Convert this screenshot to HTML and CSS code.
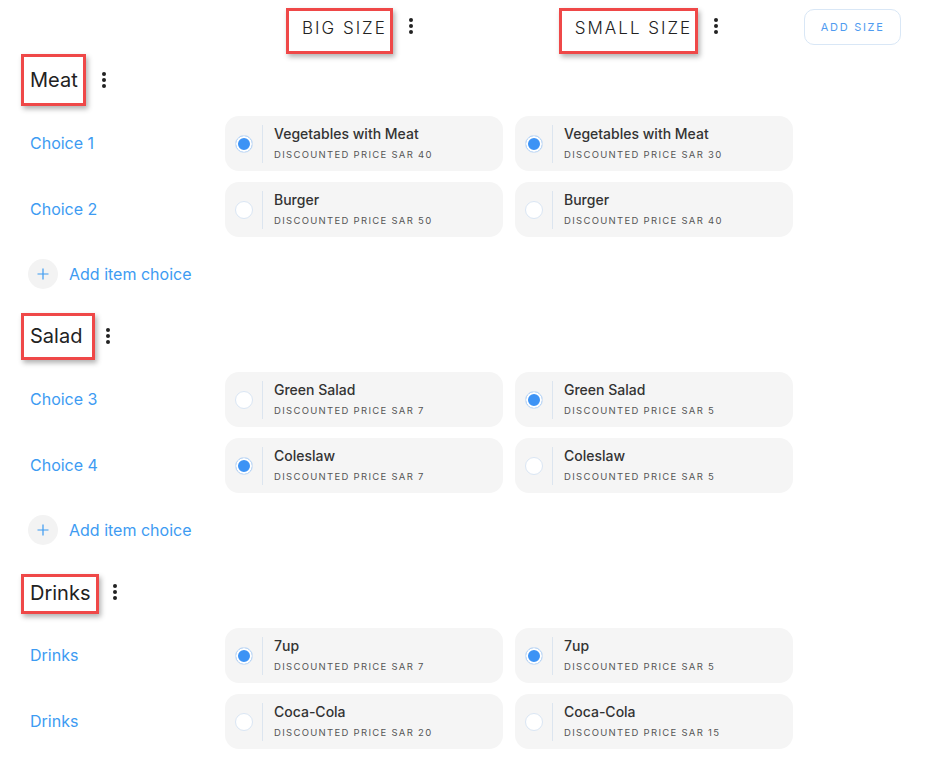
FILE: index.html
```html
<html lang="en">
    <head>
        <title>Item Choices</title>

        <link rel="stylesheet" href="styles.css">
    </head>

    <body>
        <div class="page">
            <div class="sizes">
                <div class="size size-big">
                    <span class="mark size-name">BIG SIZE</span>
                    <span class="kebab"><i></i><i></i><i></i></span>
                </div>
                <div class="size size-small">
                    <span class="mark size-name">SMALL SIZE</span>
                    <span class="kebab"><i></i><i></i><i></i></span>
                </div>
                <div class="size-action">
                    <button class="add-size">ADD SIZE</button>
                </div>
            </div>

            <div class="group">
                <div class="group-head">
                    <span class="mark group-name mark-meat">Meat</span>
                    <span class="kebab"><i></i><i></i><i></i></span>
                </div>

                <div class="row">
                    <div class="label">Choice 1</div>
                    <div class="card">
                        <span class="radio checked"></span>
                        <div class="info"><b>Vegetables with Meat</b><small>Discounted price SAR 40</small></div>
                    </div>
                    <div class="card">
                        <span class="radio checked"></span>
                        <div class="info"><b>Vegetables with Meat</b><small>Discounted price SAR 30</small></div>
                    </div>
                </div>

                <div class="row">
                    <div class="label">Choice 2</div>
                    <div class="card">
                        <span class="radio"></span>
                        <div class="info"><b>Burger</b><small>Discounted price SAR 50</small></div>
                    </div>
                    <div class="card">
                        <span class="radio"></span>
                        <div class="info"><b>Burger</b><small>Discounted price SAR 40</small></div>
                    </div>
                </div>

                <div class="add-choice">
                    <span class="plus"><svg width="12" height="12" viewBox="0 0 12 12"><path d="M6 0.5V11.5M0.5 6H11.5"/></svg></span>
                    Add item choice
                </div>
            </div>

            <div class="group">
                <div class="group-head">
                    <span class="mark group-name mark-salad">Salad</span>
                    <span class="kebab"><i></i><i></i><i></i></span>
                </div>

                <div class="row">
                    <div class="label">Choice 3</div>
                    <div class="card">
                        <span class="radio"></span>
                        <div class="info"><b>Green Salad</b><small>Discounted price SAR 7</small></div>
                    </div>
                    <div class="card">
                        <span class="radio checked"></span>
                        <div class="info"><b>Green Salad</b><small>Discounted price SAR 5</small></div>
                    </div>
                </div>

                <div class="row">
                    <div class="label">Choice 4</div>
                    <div class="card">
                        <span class="radio checked"></span>
                        <div class="info"><b>Coleslaw</b><small>Discounted price SAR 7</small></div>
                    </div>
                    <div class="card">
                        <span class="radio"></span>
                        <div class="info"><b>Coleslaw</b><small>Discounted price SAR 5</small></div>
                    </div>
                </div>

                <div class="add-choice">
                    <span class="plus"><svg width="12" height="12" viewBox="0 0 12 12"><path d="M6 0.5V11.5M0.5 6H11.5"/></svg></span>
                    Add item choice
                </div>
            </div>

            <div class="group">
                <div class="group-head">
                    <span class="mark group-name mark-drinks">Drinks</span>
                    <span class="kebab"><i></i><i></i><i></i></span>
                </div>

                <div class="row">
                    <div class="label">Drinks</div>
                    <div class="card">
                        <span class="radio checked"></span>
                        <div class="info"><b>7up</b><small>Discounted price SAR 7</small></div>
                    </div>
                    <div class="card">
                        <span class="radio checked"></span>
                        <div class="info"><b>7up</b><small>Discounted price SAR 5</small></div>
                    </div>
                </div>

                <div class="row">
                    <div class="label">Drinks</div>
                    <div class="card">
                        <span class="radio"></span>
                        <div class="info"><b>Coca-Cola</b><small>Discounted price SAR 20</small></div>
                    </div>
                    <div class="card">
                        <span class="radio"></span>
                        <div class="info"><b>Coca-Cola</b><small>Discounted price SAR 15</small></div>
                    </div>
                </div>
            </div>
        </div>
    </body>
</html>
```

FILE: styles.css
```css
body {
    margin: 0;
    padding: 0;

    font-family: Inter, "Noto Sans", sans-serif;
    color: #222;
    background-color: white;
}

.page {
    padding: 8px 0 0 21px;
}

.sizes {
    display: flex;
    align-items: flex-start;
    height: 47px;
}

.size {
    display: flex;
    align-items: flex-start;
    gap: 16px;
}

.size .kebab {
    margin-top: 10px;
}

.size-big {
    margin-left: 265px;
}

.size-small {
    margin-left: 146px;
}

.size-action {
    margin-left: 86px;
    padding-top: 1px;
}

.add-size {
    width: 97px;
    height: 36px;
    border: 1px solid #d9e7f6;
    border-radius: 10px;
    background-color: white;
    color: #4f9bf0;
    font-family: Inter, sans-serif;
    font-size: 11px;
    letter-spacing: 1.7px;
}

/* red annotation boxes */
.mark {
    display: inline-block;
    border: 3px solid #ef4848;
    box-shadow: 2px 3px 5px rgba(0, 0, 0, .3);
    box-sizing: border-box;
}

.size-name {
    height: 46px;
    line-height: 34px;
    padding: 0 3px 0 13px;
    font-size: 17px;
    font-weight: 300;
    letter-spacing: 2px;
}

.group-head {
    display: flex;
    align-items: center;
    height: 50px;
}

.group-name {
    padding: 0 5px 0 6px;
    font-size: 20px;
}

.mark-meat {
    height: 52px;
    line-height: 46px;
    margin: 0 16px 0 0;
}

.mark-salad {
    height: 47px;
    line-height: 41px;
    padding-right: 10px;
    margin: 1px 11px 0 0;
}

.mark-drinks {
    height: 40px;
    line-height: 32px;
    padding-right: 6px;
    margin: 4px 14px 0 0;
}

.kebab {
    display: flex;
    flex-direction: column;
    gap: 2px;
}

.kebab i {
    width: 4px;
    height: 4px;
    border-radius: 2px;
    background-color: #222;
}

.group {
    display: flex;
    flex-direction: column;
    gap: 11px;
    margin-bottom: 22px;
}

.row {
    display: grid;
    grid-template-columns: 192px 278px 278px;
    column-gap: 12px;
    align-items: center;
}

.label {
    padding-left: 9px;
    padding-bottom: 1px;
    font-size: 16px;
    color: #3d9bf2;
}

.card {
    display: flex;
    align-items: center;
    height: 55px;
    border-radius: 14px;
    background-color: #f5f5f5;
}

.radio {
    width: 18px;
    height: 18px;
    margin: 0 9px 0 10px;
    border: 1px solid #dae6f4;
    border-radius: 50%;
    background-color: white;
    box-sizing: border-box;
}

.radio.checked {
    background-color: #3d93f5;
    box-shadow: inset 0 0 0 2px white;
}

.info {
    display: flex;
    flex-direction: column;
    gap: 5px;
    padding-top: 1px;
    padding-left: 11px;
    border-left: 1px solid #dce5ef;
    line-height: 16px;
}

.info b {
    font-size: 14px;
    font-weight: 500;
    color: #333;
}

.info small {
    font-size: 9.5px;
    letter-spacing: 1.3px;
    text-transform: uppercase;
    color: #555;
}

.add-choice {
    display: flex;
    align-items: center;
    gap: 11px;
    margin-top: 11px;
    padding-left: 7px;
    font-size: 16px;
    color: #3d9bf2;
}

.plus {
    display: flex;
    justify-content: center;
    align-items: center;
    width: 30px;
    height: 30px;
    border-radius: 50%;
    background-color: #f3f3f3;
}

.plus svg {
    stroke: #3d9bf2;
    stroke-width: 1.2;
}
```
